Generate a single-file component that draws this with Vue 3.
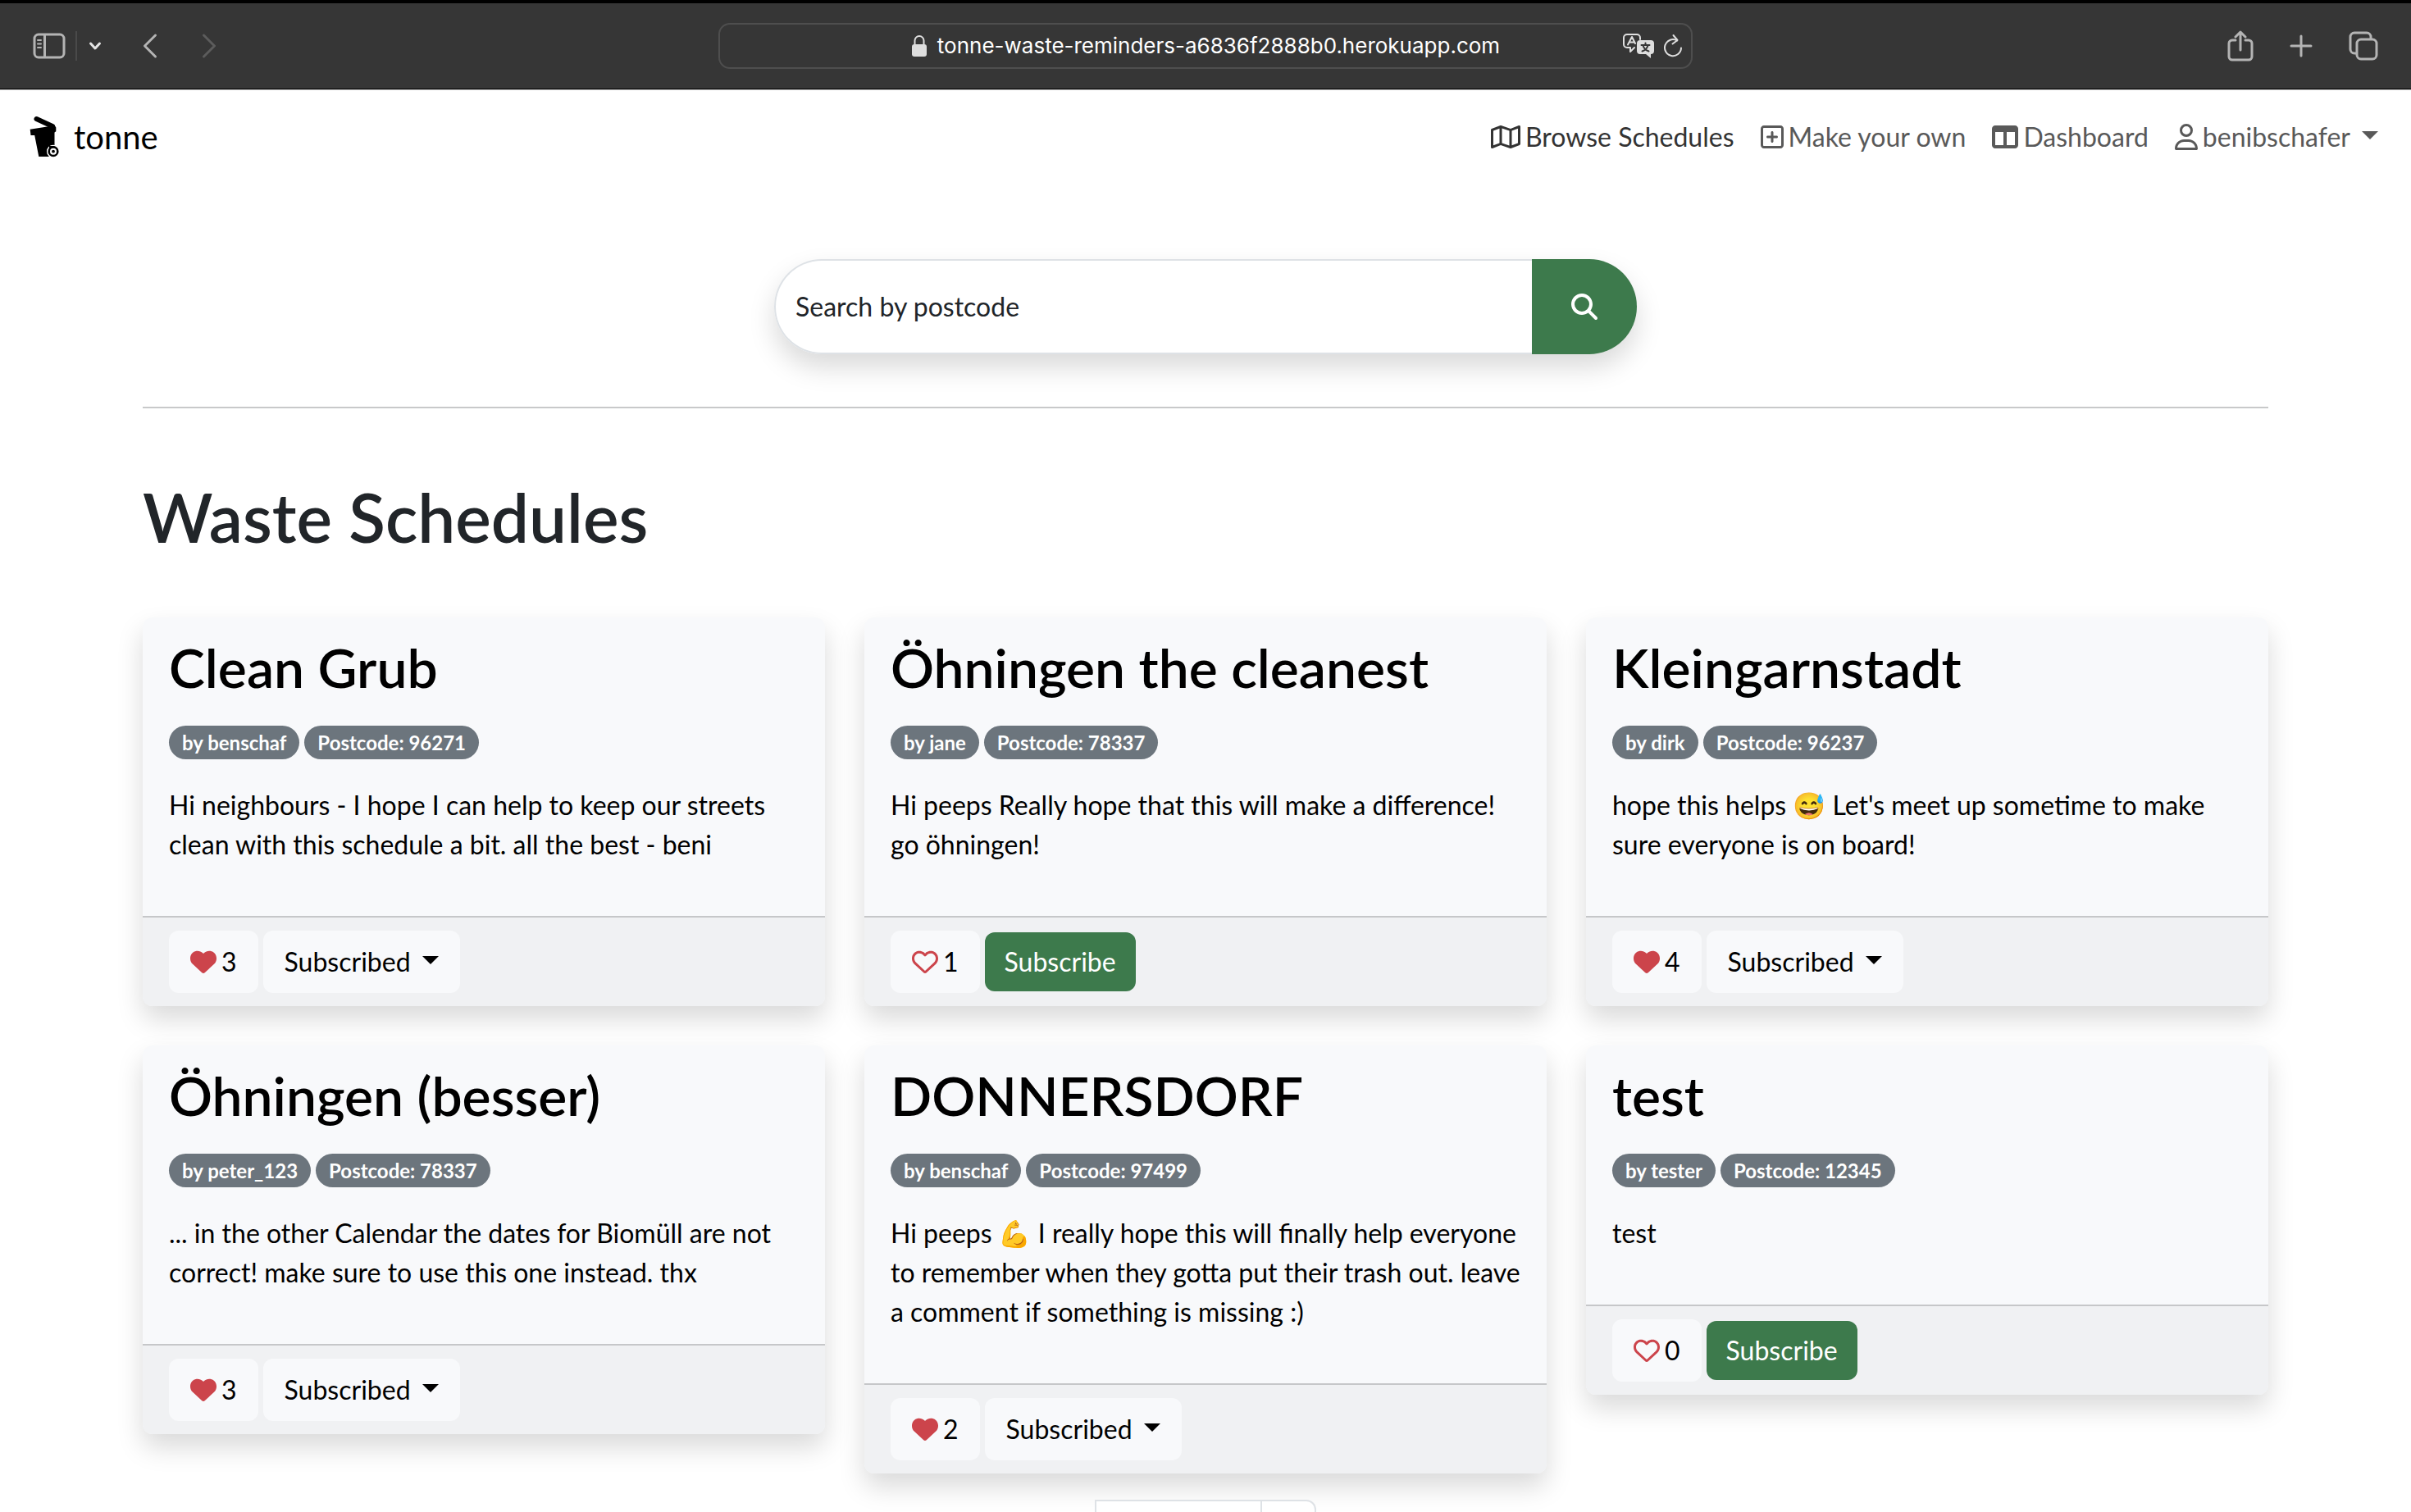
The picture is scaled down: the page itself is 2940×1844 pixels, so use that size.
<script setup>
import { ref } from 'vue'

const url = 'tonne-waste-reminders-a6836f2888b0.herokuapp.com'
const postcode = ref('')

const icons = {
  map: {
    box: '0 0 576 512',
    width: 36,
    path: 'M565.6 36.2C572.1 40.7 576 48.1 576 56V392c0 10-6.2 18.9-15.5 22.4l-168 64c-5.2 2-10.9 2.1-16.1 .3L192.5 417.5l-160 61c-7.4 2.8-15.7 1.8-22.2-2.7S0 463.9 0 456V120c0-10 6.1-18.9 15.5-22.4l168-64c5.2-2 10.9-2.1 16.1-.3L383.5 94.5l160-61c7.4-2.8 15.7-1.8 22.2 2.7zM48 136.5V421.2l120-45.7V90.8L48 136.5zM360 422.7V137.3L216 89.3V374.7l144 48zm48-1.5l120-45.7V90.8L408 136.5V421.2z',
  },
  plus: {
    box: '0 0 448 512',
    width: 28,
    path: 'M64 80c-8.800 0-16 7.200-16 16V416c0 8.800 7.200 16 16 16H384c8.800 0 16-7.200 16-16V96c0-8.800-7.200-16-16-16H64zM0 96C0 60.700 28.700 32 64 32H384c35.300 0 64 28.700 64 64V416c0 35.300-28.700 64-64 64H64c-35.300 0-64-28.700-64-64V96zM200 344V280H136c-13.300 0-24-10.700-24-24s10.700-24 24-24h64V168c0-13.300 10.700-24 24-24s24 10.700 24 24v64h64c13.300 0 24 10.700 24 24s-10.700 24-24 24H248v64c0 13.300-10.700 24-24 24s-24-10.700-24-24z',
  },
  columns: {
    box: '0 0 512 512',
    width: 32,
    path: 'M0 96C0 60.7 28.700 32 64 32H448c35.300 0 64 28.700 64 64V416c0 35.300-28.700 64-64 64H64c-35.300 0-64-28.700-64-64V96zm64 64V416H224V160H64zm384 0H288V416H448V160z',
  },
  user: {
    box: '0 0 448 512',
    width: 28,
    path: 'M304 128a80 80 0 1 0 -160 0 80 80 0 1 0 160 0zM96 128a128 128 0 1 1 256 0A128 128 0 1 1 96 128zM49.3 464H398.7c-8.900-63.300-63.300-112-129-112H178.3c-65.700 0-120.100 48.700-129 112zM0 482.3C0 383.8 79.8 304 178.3 304h91.400C368.2 304 448 383.8 448 482.3c0 16.400-13.300 29.700-29.700 29.700H29.7C13.3 512 0 498.7 0 482.3z',
  },
}

const heartFull =
  'M47.6 300.4L228.3 469.1c7.500 7 17.400 10.900 27.700 10.900s20.200-3.900 27.700-10.900L464.4 300.4c30.400-28.300 47.600-68 47.600-109.500v-5.800c0-69.900-50.500-129.500-119.400-141C347 36.5 300.6 51.4 268 84L256 96 244 84c-32.600-32.600-79-47.500-124.600-39.900C50.5 55.6 0 115.2 0 185.1v5.800c0 41.500 17.200 81.200 47.600 109.500z'
const heartEmpty =
  'M225.8 468.2l-2.500-2.300L48.1 303.2C17.4 274.7 0 234.7 0 192.8v-3.300c0-70.400 50-130.800 119.200-144C158.6 37.9 198.9 47 231 69.6c9 6.400 17.400 13.800 25 22.300c4.200-4.800 8.700-9.200 13.500-13.300c3.700-3.200 7.500-6.200 11.500-9C313.1 47 353.4 37.9 392.8 45.4C462 58.6 512 119.1 512 189.5v3.300c0 41.900-17.400 81.900-48.100 110.400L288.7 465.9l-2.500 2.300c-8.200 7.600-19 11.900-30.200 11.900s-22-4.200-30.200-11.900zM239.1 145c-.4-.3-.7-.7-1-1.100l-17.900-20.100c-23.100-25.900-58-37.700-92-31.200C81.6 101.5 48 142.1 48 189.5v3.300c0 28.500 11.900 55.800 32.800 75.200L256 430.7 431.2 268c20.900-19.400 32.800-46.700 32.800-75.200v-3.300c0-47.300-33.600-88-80.100-96.900c-34-6.500-69 5.400-92 31.200l-18 20.200c-.3 .4-.7 .7-1 1.100c-4.500 4.500-10.600 7-16.900 7s-12.400-2.500-16.900-7z'

const links = [
  { label: 'Browse Schedules', icon: icons.map, active: true },
  { label: 'Make your own', icon: icons.plus },
  { label: 'Dashboard', icon: icons.columns },
  { label: 'benibschafer', icon: icons.user, menu: true },
]

const schedules = [
  { title: 'Clean Grub', author: 'benschaf', postcode: '96271', likes: 3, subscribed: true, text: 'Hi neighbours - I hope I can help to keep our streets clean with this schedule a bit. all the best - beni' },
  { title: 'Öhningen the cleanest', author: 'jane', postcode: '78337', likes: 1, subscribed: false, text: 'Hi peeps Really hope that this will make a difference! go öhningen!' },
  { title: 'Kleingarnstadt', author: 'dirk', postcode: '96237', likes: 4, subscribed: true, text: "hope this helps 😅 Let's meet up sometime to make sure everyone is on board!" },
  { title: 'Öhningen (besser)', author: 'peter_123', postcode: '78337', likes: 3, subscribed: true, text: '... in the other Calendar the dates for Biomüll are not correct! make sure to use this one instead. thx' },
  { title: 'DONNERSDORF', author: 'benschaf', postcode: '97499', likes: 2, subscribed: true, text: 'Hi peeps 💪 I really hope this will finally help everyone to remember when they gotta put their trash out. leave a comment if something is missing :)' },
  { title: 'test', author: 'tester', postcode: '12345', likes: 0, subscribed: false, text: 'test' },
]
</script>

<template>
  <div class="window">
    <header class="chrome">
      <div class="tools">
        <button class="tool" aria-label="Sidebar">
          <svg width="40" height="32" viewBox="0 0 40 32" fill="none" stroke="#b4b4b4" stroke-width="3">
            <rect x="2" y="2" width="36" height="28" rx="5" />
            <path d="M14.500 2v28" />
            <path d="M6 9h4M6 13.500h4M6 18h4" stroke-width="2" stroke-linecap="round" />
          </svg>
        </button>
        <span class="rule"></span>
        <button class="tool down" aria-label="Tab groups">
          <svg width="16" height="12" viewBox="0 0 16 12" fill="none" stroke="#e4e4e4" stroke-width="3" stroke-linecap="round" stroke-linejoin="round">
            <path d="M2.500 3L8 9l5.500-6" />
          </svg>
        </button>
        <button class="tool back" aria-label="Back">
          <svg width="18" height="32" viewBox="0 0 18 32" fill="none" stroke="#b4b4b4" stroke-width="3" stroke-linecap="round" stroke-linejoin="round">
            <path d="M15.500 3L2.500 16l13 13" />
          </svg>
        </button>
        <button class="tool" aria-label="Forward" disabled>
          <svg width="18" height="32" viewBox="0 0 18 32" fill="none" stroke="#5c5c5c" stroke-width="3" stroke-linecap="round" stroke-linejoin="round">
            <path d="M2.500 3l13 13-13 13" />
          </svg>
        </button>
      </div>

      <div class="address">
        <div class="site">
          <svg width="20" height="28" viewBox="0 0 20 28">
            <rect x="1" y="12" width="18" height="15" rx="3" fill="#dedede" />
            <path d="M4.500 13V7.500a5.500 5.500 0 0 1 11 0V13" fill="none" stroke="#dedede" stroke-width="2" />
          </svg>
          <span>{{ url }}</span>
        </div>
        <div class="actions">
          <button class="tool" aria-label="Translate">
            <svg width="40" height="30" viewBox="0 0 40 30" fill="none" stroke="#dedede" stroke-width="2" stroke-linejoin="round" stroke-linecap="round">
              <path d="M15 17l-5 5v-5H6a4 4 0 0 1-4-4V5a4 4 0 0 1 4-4h12a4 4 0 0 1 4 4v2" />
              <path d="M7 13.500L12 4l4 8M9 10.500h6" />
              <path d="M22 8h13a4 4 0 0 1 4 4v9a4 4 0 0 1-4 4v5l-6-5h-7a4 4 0 0 1-4-4v-9a4 4 0 0 1 4-4z" fill="#dedede" stroke="none" />
              <path d="M23.500 14h10M28.500 11.500V14M31.500 14.500c-1 3.500-4 6-7 7M25.500 14.500c1 3.500 4 6 7 7" stroke="#363636" />
            </svg>
          </button>
          <button class="tool" aria-label="Reload">
            <svg width="24" height="30" viewBox="0 0 24 30" fill="none" stroke="#dedede" stroke-width="2" stroke-linecap="round" stroke-linejoin="round">
              <path d="M17 8.500A10 10 0 1 0 22 17.500" />
              <path d="M12.500 2l5 6-6 4.500" />
            </svg>
          </button>
        </div>
      </div>

      <div class="tools end">
        <button class="tool" aria-label="Share">
          <svg width="32" height="38" viewBox="0 0 32 38" fill="none" stroke="#b4b4b4" stroke-width="3" stroke-linecap="round" stroke-linejoin="round">
            <path d="M10 12H6a4 4 0 0 0-4 4v16a4 4 0 0 0 4 4h20a4 4 0 0 0 4-4V16a4 4 0 0 0-4-4h-4" />
            <path d="M16 24V2M10 8l6-6 6 6" />
          </svg>
        </button>
        <button class="tool" aria-label="New tab">
          <svg width="28" height="28" viewBox="0 0 28 28" fill="none" stroke="#b4b4b4" stroke-width="3" stroke-linecap="round">
            <path d="M14 2v24M2 14h24" />
          </svg>
        </button>
        <button class="tool" aria-label="Show tabs">
          <svg width="36" height="36" viewBox="0 0 36 36" fill="none" stroke="#b4b4b4" stroke-width="3">
            <rect x="10" y="10" width="24" height="24" rx="5" />
            <path d="M10 27H7a5 5 0 0 1-5-5V7a5 5 0 0 1 5-5h15a5 5 0 0 1 5 5v3" />
          </svg>
        </button>
      </div>
    </header>

    <div class="page">
      <nav class="navbar">
        <a class="brand" href="#">
          <svg width="38" height="52" viewBox="0 -1 38 52">
            <path d="M8.500 3L28 12" stroke="#000" stroke-width="6" stroke-linecap="round" />
            <path d="M0.700 15.700L23 12.300L26 9.500Q31 10 32.300 13.500V18.300L30.500 19.500V49H11.300L6.200 23H1.500z" />
            <circle cx="29" cy="42.700" r="8" fill="#fff" />
            <path d="M24 36h6.500v6H24z" />
            <circle cx="29" cy="42.700" r="5.300" fill="#fff" stroke="#000" stroke-width="2.600" />
            <circle cx="29" cy="42.700" r="1.900" />
          </svg>
          <span>tonne</span>
        </a>
        <ul class="links">
          <li v-for="link in links" :key="link.label">
            <a href="#" class="link" :class="{ active: link.active }">
              <svg :width="link.icon.width" height="32" :viewBox="link.icon.box" fill="currentColor">
                <path :d="link.icon.path" />
              </svg>
              <span>{{ link.label }}</span>
              <span v-if="link.menu" class="caret"></span>
            </a>
          </li>
        </ul>
      </nav>

      <main class="container">
        <form class="search" @submit.prevent>
          <input v-model="postcode" type="text" placeholder="Search by postcode" aria-label="Search by postcode" />
          <button type="submit" aria-label="Search">
            <svg width="32" height="32" viewBox="0 0 512 512" fill="#fff">
              <path d="M416 208c0 45.900-14.900 88.300-40 122.700L502.600 457.400c12.500 12.500 12.500 32.800 0 45.300s-32.800 12.500-45.300 0L330.700 376c-34.400 25.200-76.800 40-122.700 40C93.100 416 0 322.900 0 208S93.100 0 208 0S416 93.100 416 208zM208 352a144 144 0 1 0 0-288 144 144 0 1 0 0 288z" />
            </svg>
          </button>
        </form>
        <hr />
        <h1>Waste Schedules</h1>

        <section class="grid">
          <article v-for="item in schedules" :key="item.title" class="card">
            <div class="body">
              <h2>{{ item.title }}</h2>
              <div class="badges">
                <span class="badge">by {{ item.author }}</span>
                <span class="badge">Postcode: {{ item.postcode }}</span>
              </div>
              <p>{{ item.text }}</p>
            </div>
            <footer>
              <button class="btn like" aria-label="Like">
                <svg width="32" height="32" viewBox="0 0 512 512" fill="#cc444b">
                  <path :d="item.subscribed ? heartFull : heartEmpty" />
                </svg>
                <span>{{ item.likes }}</span>
              </button>
              <button v-if="item.subscribed" class="btn">
                Subscribed
                <span class="caret"></span>
              </button>
              <button v-else class="btn primary">Subscribe</button>
            </footer>
          </article>
        </section>

        <div class="pagination">
          <button class="current" aria-label="Current page"></button>
          <button class="next" aria-label="Next page"></button>
        </div>
      </main>
    </div>
  </div>
</template>

<style>
body {
  margin: 0;
  background: #fff;
}
</style>

<style scoped>
* {
  box-sizing: border-box;
}
.window {
  height: 100vh;
  display: flex;
  flex-direction: column;
  overflow: hidden;
  font-family: Lato, "Noto Color Emoji", sans-serif;
  font-size: 32px;
  line-height: 48px;
  color: #212529;
}
button,
input {
  font: inherit;
  margin: 0;
}
svg {
  display: block;
  flex: none;
}
.chrome {
  flex: none;
  height: 109px;
  display: grid;
  grid-template-columns: 1fr minmax(0, 1188px) 1fr;
  align-items: center;
  padding: 0 40px;
  background: #363636;
  border-top: 4px solid #000;
  border-bottom: 1px solid #000;
}
.tools {
  display: flex;
  align-items: center;
}
.tools.end {
  justify-content: flex-end;
  gap: 44px;
}
.tool {
  padding: 0;
  border: 0;
  background: none;
}
.rule {
  width: 2px;
  height: 36px;
  margin: 0 14px 0 12px;
  background: #4a4a4a;
}
.down {
  margin-right: 50px;
}
.back {
  margin-right: 54px;
}
.address {
  height: 56px;
  position: relative;
  display: flex;
  align-items: center;
  justify-content: center;
  border: 2px solid #4e4e4e;
  border-radius: 14px;
  color: #fff;
  font-family: Inter, sans-serif;
  font-size: 26px;
  line-height: 32px;
}
.site {
  display: flex;
  align-items: center;
  gap: 12px;
}
.actions {
  position: absolute;
  right: 10px;
  display: flex;
  align-items: center;
  gap: 10px;
}
.page {
  flex: 1;
  min-height: 0;
  overflow: hidden;
  border-top: 1px solid #bbb;
}
.navbar {
  height: 114px;
  display: flex;
  align-items: center;
  justify-content: space-between;
  padding: 0 40px 0 36px;
}
a {
  color: inherit;
  text-decoration: none;
}
.brand {
  display: flex;
  align-items: center;
  gap: 16px;
  font-size: 40px;
  color: #000;
}
.links {
  display: flex;
  gap: 32px;
  margin: 0;
  padding: 0;
  list-style: none;
}
.link {
  display: flex;
  align-items: center;
  gap: 6px;
  color: #595959;
}
.link.active {
  color: #333;
}
.caret {
  border: 10px solid transparent;
  border-top-color: currentColor;
  border-bottom: 0;
  margin: 0 0 4px 8px;
}
.container {
  max-width: 2592px;
  margin: 92px auto 0;
}
.search {
  max-width: 1052px;
  height: 116px;
  margin: 0 auto;
  display: flex;
  border-radius: 58px;
  box-shadow: 0 16px 32px rgba(0, 0, 0, 0.15);
}
.search input {
  flex: 1;
  min-width: 0;
  padding: 0 24px;
  border: 2px solid #dee2e6;
  border-right: 0;
  border-radius: 58px 0 0 58px;
  background: #fff;
  color: #212529;
}
.search input::placeholder {
  color: #212529;
  opacity: 1;
}
.search button {
  width: 128px;
  padding: 0;
  display: flex;
  align-items: center;
  justify-content: center;
  border: 0;
  border-radius: 0 58px 58px 0;
  background: #3d7a4c;
}
hr {
  margin: 64px 0 84px;
  border: 0;
  border-top: 2px solid #c8c9ca;
}
h1 {
  margin: 0 0 75px;
  font-size: 82px;
  font-weight: 600;
  line-height: 96px;
}
.grid {
  display: grid;
  grid-template-columns: repeat(3, 1fr);
  align-items: start;
  gap: 48px;
}
.card {
  border-radius: 12px;
  background: #f8f9fb;
  box-shadow: 0 16px 32px rgba(0, 0, 0, 0.15);
  color: #000;
}
.body {
  padding: 32px 32px 63px;
}
h2 {
  margin: 0 0 42px;
  font-size: 66px;
  font-weight: 600;
  line-height: 58px;
}
.badges {
  display: flex;
  gap: 6px;
}
.badge {
  padding: 8px 16px;
  border-radius: 21px;
  background: #6c757d;
  color: #fff;
  font-size: 24px;
  font-weight: 700;
  line-height: 25px;
}
p {
  margin: 32px 0 0;
}
footer {
  display: flex;
  align-items: center;
  gap: 6px;
  padding: 16px 32px;
  border-top: 2px solid #c6c7c9;
  border-radius: 0 0 12px 12px;
  background: #f0f1f3;
}
.btn {
  display: flex;
  align-items: center;
  gap: 6px;
  padding: 14px 26px;
  border: 0;
  border-radius: 12px;
  background: #f8f9fb;
  color: #000;
}
.btn.primary {
  padding: 12px 24px;
  background: #3d7a4c;
  color: #fff;
}
.pagination {
  display: flex;
  justify-content: center;
  margin-top: 32px;
}
.pagination button {
  height: 76px;
  padding: 0;
  border: 2px solid #dee2e6;
  background: #fff;
}
.current {
  width: 204px;
}
.pagination .next {
  width: 66px;
  border-left: 0;
  border-radius: 0 12px 12px 0;
}
</style>
